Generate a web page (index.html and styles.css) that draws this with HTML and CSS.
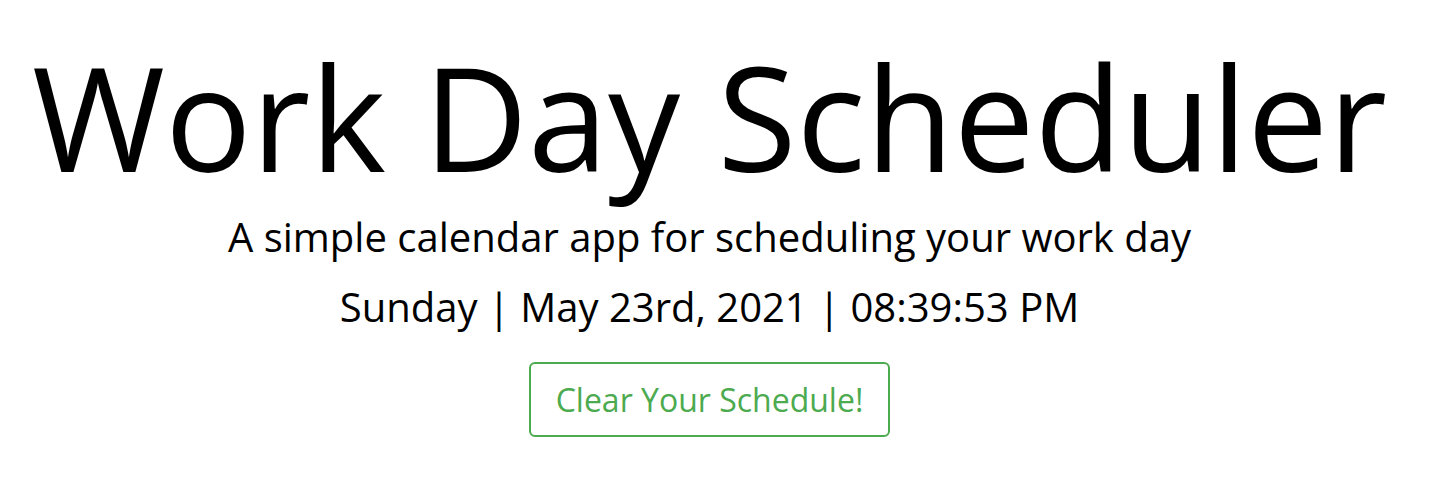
FILE: index.html
```html
<!DOCTYPE html>
<html lang="en">
<head>
<meta charset="utf-8">
<title>Work Day Scheduler</title>
<link rel="stylesheet" href="styles.css">
</head>
<body>
<header class="jumbotron">
  <h1 class="title">Work Day Scheduler</h1>
  <p class="lead">A simple calendar app for scheduling your work day</p>
  <p class="current-day">Sunday | May 23rd, 2021 | 08:39:53 PM</p>
  <button class="clear-btn" type="button">Clear Your Schedule!</button>
</header>
</body>
</html>
```

FILE: styles.css
```css
html, body {
  margin: 0;
  padding: 0;
  background: #ffffff;
}
body {
  font-family: "Open Sans", "Liberation Sans", sans-serif;
  color: #000;
}
.jumbotron {
  display: flex;
  flex-direction: column;
  align-items: center;
  text-align: center;
  padding: 30px 17px 0 0;
}
.title {
  margin: 0;
  font-size: 144px;
  font-weight: 400;
  line-height: 1.2;
}
.lead {
  margin: 4px 0 0;
  font-size: 40px;
  line-height: 1.5;
}
.current-day {
  margin: 10px 0 0;
  font-size: 40px;
  line-height: 1.5;
}
.clear-btn {
  margin-top: 25px;
  font-family: inherit;
  font-size: 32px;
  color: #4caa4f;
  background: #fff;
  border: 2px solid #4caa4f;
  border-radius: 6px;
  padding: 12px 25px;
  line-height: 47px;
}
```
